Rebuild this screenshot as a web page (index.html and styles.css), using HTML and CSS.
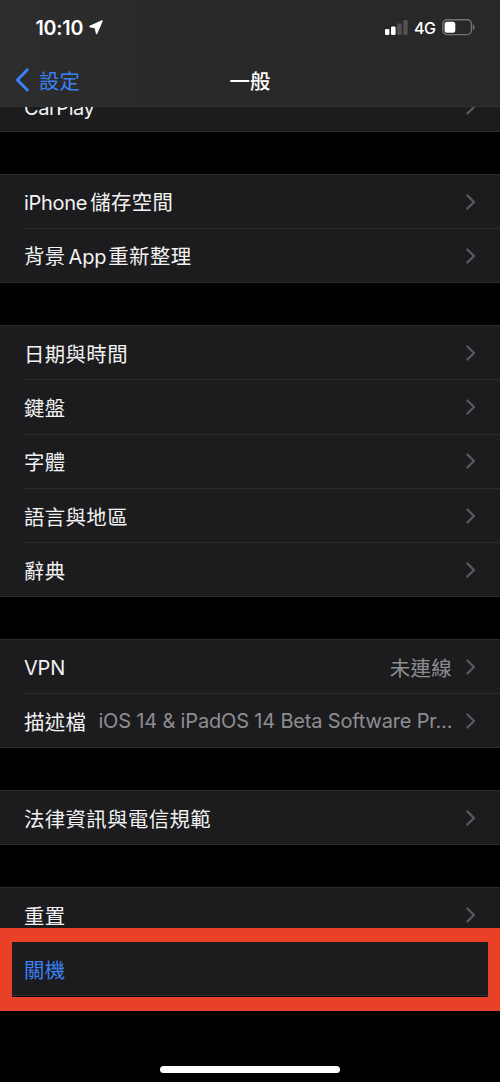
FILE: index.html
```html
<!DOCTYPE html>
<html lang="zh-Hant">
<head>
<meta charset="utf-8">
<title>一般</title>
<link rel="stylesheet" href="styles.css">
</head>
<body>
<svg class="defs" width="0" height="0"><symbol id="chevron" viewBox="0 0 10 16"><path d="M1.4 1.5 8 8 1.4 14.5" fill="none" stroke="currentColor" stroke-width="2.2" stroke-linecap="round" stroke-linejoin="round"/></symbol></svg>
<div class="phone">
  <header class="header">
    <div class="status">
      <span class="time">10:10</span>
      <svg class="location" width="14" height="15" viewBox="0 0 14 15"><path d="M13 1 1 6.4 6.4 7.8 7.6 13.4Z" fill="#fff" stroke="#fff" stroke-width="1.5" stroke-linejoin="round"/></svg>
      <svg class="signal" width="23" height="16" viewBox="0 0 23 16"><rect x="0" y="9" width="4.4" height="6" rx="1.3" fill="#fff"/><rect x="6" y="6.5" width="4.6" height="8.5" rx="1.3" fill="#fff"/><rect x="12.2" y="3.5" width="4.4" height="11.5" rx="1.3" fill="#525252"/><rect x="18.3" y="0" width="4.4" height="15" rx="1.3" fill="#525252"/></svg>
      <span class="network">4G</span>
      <svg class="battery" width="33" height="17" viewBox="0 0 33 17"><rect x=".8" y=".8" width="28.6" height="14.8" rx="4.3" fill="none" stroke="#747474" stroke-width="1.4"/><path d="M30.8 5.2v6c2.2-1 2.2-5 0-6Z" fill="#747474"/><rect x="2.6" y="2.7" width="10.7" height="11" rx="2.5" fill="#fff"/></svg>
    </div>
    <nav class="nav">
      <a class="back"><svg width="15" height="24" viewBox="0 0 15 24"><path d="M12.3 1.8 2.4 12l9.9 10" fill="none" stroke="currentColor" stroke-width="3" stroke-linecap="round" stroke-linejoin="round"/></svg><span>設定</span></a>
      <h1 class="title">一般</h1>
    </nav>
  </header>
  <main class="list">
    <section class="group first"><div class="row"><span class="label"><span class="latin carplay">CarPlay</span></span><svg class="chevron"><use href="#chevron"/></svg></div></section>
    <section class="group">
      <div class="row"><span class="label"><span class="latin iphone">iPhone</span>儲存空間</span><svg class="chevron"><use href="#chevron"/></svg></div>
      <div class="row"><span class="label">背景<span class="latin app">App</span>重新整理</span><svg class="chevron"><use href="#chevron"/></svg></div>
    </section>
    <section class="group">
      <div class="row"><span class="label">日期與時間</span><svg class="chevron"><use href="#chevron"/></svg></div>
      <div class="row"><span class="label">鍵盤</span><svg class="chevron"><use href="#chevron"/></svg></div>
      <div class="row"><span class="label">字體</span><svg class="chevron"><use href="#chevron"/></svg></div>
      <div class="row"><span class="label">語言與地區</span><svg class="chevron"><use href="#chevron"/></svg></div>
      <div class="row"><span class="label">辭典</span><svg class="chevron"><use href="#chevron"/></svg></div>
    </section>
    <section class="group">
      <div class="row"><span class="label"><span class="latin vpn">VPN</span></span><span class="value">未連線</span><svg class="chevron"><use href="#chevron"/></svg></div>
      <div class="row"><span class="label">描述檔</span><span class="value latin profile">iOS 14 &amp; iPadOS 14 Beta Software Pr...</span><svg class="chevron"><use href="#chevron"/></svg></div>
    </section>
    <section class="group">
      <div class="row"><span class="label">法律資訊與電信規範</span><svg class="chevron"><use href="#chevron"/></svg></div>
    </section>
    <section class="group">
      <div class="row"><span class="label">重置</span><svg class="chevron"><use href="#chevron"/></svg></div>
      <div class="row action"><span class="label">關機</span></div>
    </section>
  </main>
  <div class="highlight"></div>
  <div class="home-indicator"></div>
</div>
</body>
</html>
```
FILE: styles.css
```css
* { box-sizing: border-box; }
body { margin: 0; background: #000; }
.defs { position: absolute; }
.phone {
  position: relative;
  width: 500px;
  height: 1082px;
  overflow: hidden;
  background: #000;
  color: #f2f2f2;
  font: 400 20.4px/30px "Noto Sans CJK TC", sans-serif;
}
.header {
  position: relative;
  z-index: 1;
  height: 107px;
  background: linear-gradient(90deg, #2d2d2d, #282828 45%);
  border-bottom: 1px solid #303031;
}
.status {
  display: flex;
  align-items: center;
  height: 54px;
  padding: 0 25px 0 35.5px;
  color: #fff;
  font-family: Inter, sans-serif;
}
.time { width: 48.5px; margin-top: 1px; font-size: 19.6px; font-weight: 600; letter-spacing: -0.2px; white-space: nowrap; }
.location { margin-left: 5px; }
.signal { margin-left: auto; margin-top: 1px; }
.network { width: 22px; margin: 1px 6px 0 6px; font-size: 16px; font-weight: 500; letter-spacing: -0.4px; white-space: nowrap; }
.battery { flex: none; }
.nav { display: grid; grid-template-columns: 1fr 1fr 1fr; align-items: center; height: 51px; padding: 0 15px; }
.back { display: flex; align-items: center; gap: 9px; color: #3b82f6; }
.title { margin: 0; font-size: 20.4px; font-weight: 500; text-align: center; color: #fff; }
.list { margin-top: -29.6px; }
.group { margin-bottom: 42px; background: #1c1c1e; border-top: 1px solid #2b2b2d; border-bottom: 1px solid #2b2b2d; }
.row {
  display: flex;
  align-items: center;
  height: 54.35px;
  margin-left: 24px;
  padding-right: 24px;
}
.row:first-child { height: 53.1px; padding-top: 1px; }
.row:last-child { height: 53.9px; padding-top: 1px; }
.row:only-child { height: 52.7px; padding-top: 1px; }
.row + .row { border-top: 1px solid #2b2b2d; }
.first .row:only-child { padding-top: 4px; }
.label { letter-spacing: 0.4px; white-space: nowrap; }
.latin { font-family: Inter, sans-serif; font-size: 20px; letter-spacing: 0; }
.value { margin-left: auto; color: #8e8e92; letter-spacing: 0.4px; white-space: nowrap; }
.carplay { letter-spacing: -0.45px; }
.vpn { letter-spacing: -0.2px; }
.iphone { margin-right: 3px; letter-spacing: -0.3px; }
.app { margin: 0 2px 0 3px; letter-spacing: -0.2px; }
.chevron { flex: none; width: 10px; height: 16px; color: #5b5b5f; margin-left: auto; }
.value + .chevron { margin-left: 14px; }
.value.profile { margin-left: 12px; letter-spacing: -0.17px; }
.action { color: #3b82f6; }
.highlight { position: absolute; left: 0; top: 928px; width: 500px; height: 83px; border: solid #e94127; border-width: 14px 12px; }
.home-indicator { position: absolute; left: 160px; top: 1066px; width: 180px; height: 7px; border-radius: 4px; background: #fff; }
```
